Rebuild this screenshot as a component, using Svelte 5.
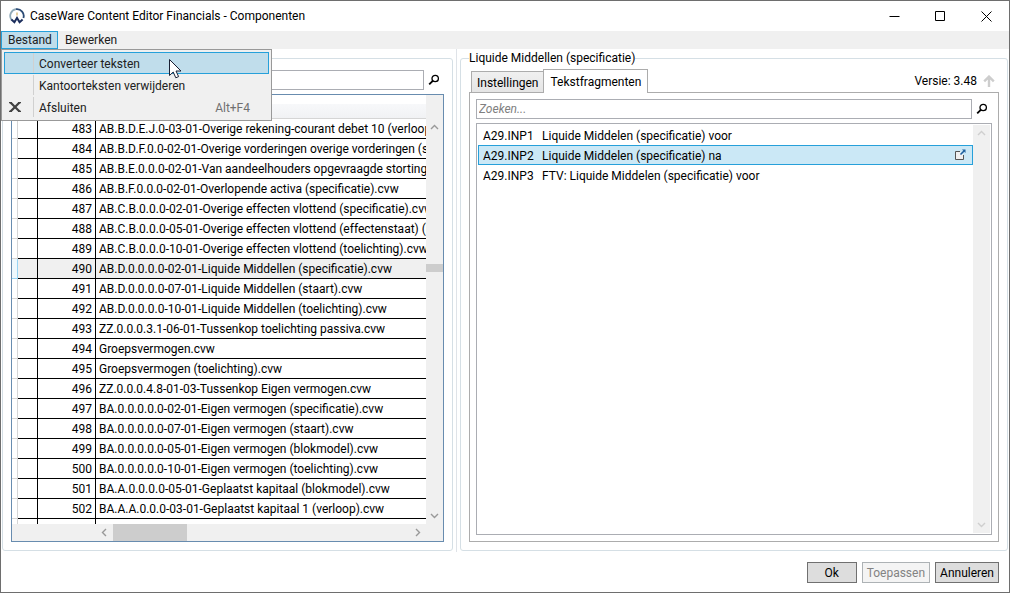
<script lang="ts">
    type Row = { nr: number; name: string };

    let components: Row[] = [
        { nr: 483, name: 'AB.B.D.E.J.0-03-01-Overige rekening-courant debet 10 (verloop).cvw' },
        { nr: 484, name: 'AB.B.D.F.0.0-02-01-Overige vorderingen overige vorderingen (specificatie).cvw' },
        { nr: 485, name: 'AB.B.E.0.0.0-02-01-Van aandeelhouders opgevraagde stortingen.cvw' },
        { nr: 486, name: 'AB.B.F.0.0.0-02-01-Overlopende activa (specificatie).cvw' },
        { nr: 487, name: 'AB.C.B.0.0.0-02-01-Overige effecten vlottend (specificatie).cvw' },
        { nr: 488, name: 'AB.C.B.0.0.0-05-01-Overige effecten vlottend (effectenstaat) (blokmodel).cvw' },
        { nr: 489, name: 'AB.C.B.0.0.0-10-01-Overige effecten vlottend (toelichting).cvw' },
        { nr: 490, name: 'AB.D.0.0.0.0-02-01-Liquide Middellen (specificatie).cvw' },
        { nr: 491, name: 'AB.D.0.0.0.0-07-01-Liquide Middellen (staart).cvw' },
        { nr: 492, name: 'AB.D.0.0.0.0-10-01-Liquide Middellen (toelichting).cvw' },
        { nr: 493, name: 'ZZ.0.0.0.3.1-06-01-Tussenkop toelichting passiva.cvw' },
        { nr: 494, name: 'Groepsvermogen.cvw' },
        { nr: 495, name: 'Groepsvermogen (toelichting).cvw' },
        { nr: 496, name: 'ZZ.0.0.0.4.8-01-03-Tussenkop Eigen vermogen.cvw' },
        { nr: 497, name: 'BA.0.0.0.0.0-02-01-Eigen vermogen (specificatie).cvw' },
        { nr: 498, name: 'BA.0.0.0.0.0-07-01-Eigen vermogen (staart).cvw' },
        { nr: 499, name: 'BA.0.0.0.0.0-05-01-Eigen vermogen (blokmodel).cvw' },
        { nr: 500, name: 'BA.0.0.0.0.0-10-01-Eigen vermogen (toelichting).cvw' },
        { nr: 501, name: 'BA.A.0.0.0.0-05-01-Geplaatst kapitaal (blokmodel).cvw' },
        { nr: 502, name: 'BA.A.A.0.0.0-03-01-Geplaatst kapitaal 1 (verloop).cvw' }
    ];

    let fragments = [
        { code: 'A29.INP1', title: 'Liquide Middelen (specificatie) voor' },
        { code: 'A29.INP2', title: 'Liquide Middelen (specificatie) na' },
        { code: 'A29.INP3', title: 'FTV: Liquide Middelen (specificatie) voor' }
    ];

    let selectedRow = 490;
    let selectedFragment = 'A29.INP2';
    let activeTab = 'Tekstfragmenten';
    let menuOpen = true;
    let componentQuery = '';
    let fragmentQuery = '';
</script>

{#snippet magnifier()}
    <svg width="12" height="12" viewBox="0 0 12 12" aria-hidden="true">
        <circle cx="7.2" cy="4.5" r="3.2" fill="none" stroke="#000" stroke-width="1.3" />
        <path d="M4.8 6.8L1.2 10.4" stroke="#000" stroke-width="1.8" />
    </svg>
{/snippet}

{#snippet chevron(d: string)}
    <svg width="9" height="9" viewBox="0 0 9 9" aria-hidden="true">
        <path {d} fill="none" stroke="currentColor" stroke-width="1.4" />
    </svg>
{/snippet}

<div class="window">
    <header class="titlebar">
        <svg class="logo" width="16" height="16" viewBox="0 0 16 16" aria-hidden="true">
            <path d="M2.6 12A6.8 6.8 0 0 1 7 1.2" fill="none" stroke="#8fa9b8" stroke-width="1.8" />
            <path d="M7 1.2A6.8 6.8 0 0 1 14.4 10" fill="none" stroke="#2b4a75" stroke-width="1.8" />
            <path d="M8 4.5V7.5" stroke="#d9b977" stroke-width="1.4" />
            <path d="M2.4 11.5L5.4 14.2L8 10L10.6 14.2L13.6 11.5" fill="none" stroke="#1b2d5c" stroke-width="2" />
        </svg>
        <h1>CaseWare Content Editor Financials - Componenten</h1>
        <button class="caption" aria-label="Minimaliseren">
            <svg width="11" height="11" viewBox="0 0 11 11"><path d="M.5 5.5H10.5" stroke="#000" /></svg>
        </button>
        <button class="caption" aria-label="Maximaliseren">
            <svg width="11" height="11" viewBox="0 0 11 11"><path d="M.5 .5H9.5V9.5H.5Z" fill="none" stroke="#000" /></svg>
        </button>
        <button class="caption" aria-label="Sluiten">
            <svg width="11" height="11" viewBox="0 0 11 11"><path d="M.5 .5L10.5 10.5M10.5 .5L.5 10.5" stroke="#000" /></svg>
        </button>
    </header>

    <nav class="menubar">
        <button class="menu-title" class:open={menuOpen} on:click={() => (menuOpen = !menuOpen)}>Bestand</button>
        <button class="menu-title">Bewerken</button>

        {#if menuOpen}
            <div class="menu">
                <button class="menu-item highlighted">
                    <span class="menu-icon"></span>
                    <span class="menu-text">Converteer teksten</span>
                </button>
                <button class="menu-item">
                    <span class="menu-icon"></span>
                    <span class="menu-text">Kantoorteksten verwijderen</span>
                </button>
                <button class="menu-item">
                    <span class="menu-icon">
                        <svg width="12" height="10" viewBox="0 0 12 10">
                            <path d="M1.5 .5L10.5 9.5M10.5 .5L1.5 9.5" stroke="#424242" stroke-width="2.2" />
                            <path d="M0 .6H3M9 .6H12M0 9.4H3M9 9.4H12" stroke="#424242" stroke-width="1.2" />
                        </svg>
                    </span>
                    <span class="menu-text">Afsluiten</span>
                    <span class="shortcut">Alt+F4</span>
                </button>
                <svg class="pointer" width="13" height="20" viewBox="0 0 13 20" aria-hidden="true">
                    <path d="M.5 .5V16.5L4.2 13L6.8 18.8L9.6 17.6L7 12H12Z" fill="#fff" stroke="#1a1f33" />
                </svg>
            </div>
        {/if}
    </nav>

    <main class="panes">
        <section class="pane left">
            <fieldset class="group">
                <div class="search">
                    <input type="text" aria-label="Componenten zoeken" bind:value={componentQuery} />
                    <button class="search-btn" aria-label="Zoeken">{@render magnifier()}</button>
                </div>
                <div class="datagrid">
                    <div class="viewport">
                        <table>
                            <colgroup>
                                <col class="col-head" />
                                <col class="col-mark" />
                                <col class="col-nr" />
                                <col />
                            </colgroup>
                            <thead>
                                <tr><th></th><th></th><th></th><th></th></tr>
                            </thead>
                            <tbody>
                                {#each components as row}
                                    <tr class:selected={row.nr === selectedRow} on:click={() => (selectedRow = row.nr)}>
                                        <td class="row-head"></td>
                                        <td></td>
                                        <td class="nr">{row.nr}</td>
                                        <td class="name">{row.name}</td>
                                    </tr>
                                {/each}
                                <tr><td class="row-head"></td><td></td><td></td><td class="name"></td></tr>
                            </tbody>
                        </table>
                    </div>
                    <div class="vscroll grid-vscroll">
                        {@render chevron('M1 6L4.5 2.5L8 6')}
                        <span class="vthumb"></span>
                        {@render chevron('M1 3L4.5 6.5L8 3')}
                    </div>
                    <div class="hscroll">
                        {@render chevron('M6 1L2.5 4.5L6 8')}
                        <span class="htrack"><span class="hthumb"></span></span>
                        {@render chevron('M3 1L6.5 4.5L3 8')}
                    </div>
                </div>
            </fieldset>
        </section>

        <div class="splitter"></div>

        <section class="pane right">
            <fieldset class="group">
                <legend>Liquide Middellen (specificatie)</legend>
                <div class="tabs">
                    {#each ['Instellingen', 'Tekstfragmenten'] as tab}
                        <button class="tab" class:active={tab === activeTab} on:click={() => (activeTab = tab)}>{tab}</button>
                    {/each}
                    <div class="version">
                        <span>Versie: 3.48</span>
                        <svg width="12" height="12" viewBox="0 0 12 12" aria-hidden="true">
                            <path d="M6 12V2M1.2 6.4L6 1.6L10.8 6.4" fill="none" stroke="#cdcdcd" stroke-width="2.4" />
                        </svg>
                    </div>
                </div>
                <div class="tab-body">
                    <div class="search">
                        <input type="text" placeholder="Zoeken..." aria-label="Tekstfragmenten zoeken" bind:value={fragmentQuery} />
                        <button class="search-btn" aria-label="Zoeken">{@render magnifier()}</button>
                    </div>
                    <div class="listbox">
                        <ul>
                            {#each fragments as f}
                                <li class:selected={f.code === selectedFragment}>
                                    <button class="fragment" on:click={() => (selectedFragment = f.code)}>
                                        <span class="code">{f.code}</span>
                                        <span>{f.title}</span>
                                    </button>
                                    {#if f.code === selectedFragment}
                                        <button class="open-btn" aria-label="Openen">
                                            <svg width="12" height="12" viewBox="0 0 12 12">
                                                <path d="M6 2.5H1.5V10.5H9.5V6" fill="#f0f0f0" stroke="#555" />
                                                <path d="M6.5 5.5L10 2" stroke="#1c5f9e" stroke-width="1.6" />
                                                <path d="M8 .5H11.5V4Z" fill="#1c5f9e" />
                                            </svg>
                                        </button>
                                    {/if}
                                </li>
                            {/each}
                        </ul>
                        <div class="vscroll faint">
                            {@render chevron('M1 6L4.5 2.5L8 6')}
                            {@render chevron('M1 3L4.5 6.5L8 3')}
                        </div>
                    </div>
                </div>
            </fieldset>
        </section>
    </main>

    <footer class="actions">
        <button class="action">Ok</button>
        <button class="action" disabled>Toepassen</button>
        <button class="action">Annuleren</button>
    </footer>
</div>

<style>
    :global(body) {
        margin: 0;
    }

    .window,
    .window * {
        box-sizing: border-box;
    }

    .window {
        display: flex;
        flex-direction: column;
        height: 100vh;
        border: 1px solid #6e6e6e;
        background: #fff;
        color: #000;
        font-family: "Segoe UI", Roboto, "Open Sans", sans-serif;
        font-size: 12px;
        line-height: 16px;
        overflow: hidden;
    }

    button,
    input {
        font: inherit;
        color: inherit;
        margin: 0;
    }

    button {
        border: none;
        background: none;
        padding: 0;
        white-space: nowrap;
    }

    svg {
        display: block;
        flex: none;
    }

    /* Title bar */
    .titlebar {
        display: flex;
        align-items: center;
        height: 30px;
        flex: none;
        padding-left: 8px;
    }

    h1 {
        flex: 1;
        margin: 0 0 0 5px;
        font-size: 12px;
        font-weight: normal;
    }

    .caption {
        display: flex;
        align-items: center;
        justify-content: center;
        width: 46px;
        height: 30px;
    }

    /* Menu */
    .menubar {
        position: relative;
        display: flex;
        flex: none;
        height: 18px;
        background: #f0f0f0;
        color: #212121;
    }

    .menu-title {
        padding: 0 5px 0 6px;
        border: 1px solid transparent;
    }

    .menu-title.open {
        border-color: #26a0da;
        background: #c0ddeb;
    }

    .menu {
        position: absolute;
        top: 18px;
        left: 0;
        z-index: 10;
        width: 271px;
        padding: 2px;
        border: 1px solid #999;
        background: #f0f0f0;
    }

    .menu-item {
        display: flex;
        align-items: center;
        width: 100%;
        height: 22px;
        border: 1px solid transparent;
        text-align: left;
    }

    .menu-item.highlighted {
        border-color: #26a0da;
        background: #c0ddeb;
    }

    .menu-icon {
        display: flex;
        align-items: center;
        align-self: stretch;
        width: 29px;
        padding-left: 4px;
        border-right: 1px solid #d0d0d0;
    }

    .menu-text {
        flex: 1;
        padding: 2px 0 0 5px;
    }

    .shortcut {
        padding: 2px 18px 0 0;
        color: #707070;
    }

    .pointer {
        position: absolute;
        top: 9px;
        left: 167px;
    }

    /* Panes */
    .panes {
        display: grid;
        grid-template-columns: minmax(0, 455fr) 1px minmax(0, 552fr);
        flex: 1;
        min-height: 0;
    }

    .pane {
        display: flex;
        min-width: 0;
        min-height: 0;
    }

    .left {
        padding: 9px 3px 1px 1px;
    }

    .right {
        padding: 1px 1px 1px 3px;
    }

    .splitter {
        background: #dfe3e8;
    }

    .group {
        display: flex;
        flex-direction: column;
        flex: 1;
        min-width: 0;
        min-height: 0;
        margin: 0;
        padding: 11px 8px 8px;
        border: 1px solid #d5dfe5;
        border-radius: 3px;
    }

    .right .group {
        padding-top: 3px;
    }

    legend {
        margin: 0;
        padding: 0;
    }

    .search {
        display: flex;
        flex: none;
        height: 20px;
    }

    .search input {
        flex: 1;
        min-width: 0;
        padding: 0 2px;
        border: 1px solid #abadb3;
        background: #fff;
        outline: none;
    }

    .search input::placeholder {
        color: #808080;
        font-style: italic;
        opacity: 1;
    }

    .search-btn {
        display: flex;
        align-items: center;
        justify-content: center;
        width: 20px;
    }

    /* Component table */
    .datagrid {
        display: grid;
        grid-template-columns: minmax(0, 1fr) 17px;
        grid-template-rows: minmax(0, 1fr) 17px;
        flex: 1;
        min-height: 0;
        margin-top: 4px;
        border: 1px solid #688caf;
    }

    .viewport {
        overflow: hidden;
    }

    table {
        width: 100%;
        table-layout: fixed;
        border-collapse: separate;
        border-spacing: 0;
    }

    .col-head {
        width: 6px;
    }

    .col-mark {
        width: 20px;
    }

    .col-nr {
        width: 58px;
    }

    th {
        height: 24px;
        padding: 0;
        border-bottom: 1px solid #d5d5d5;
        background: linear-gradient(#fff 40%, #f7f8fa 40%, #f1f2f4);
    }

    td {
        height: 20px;
        padding: 0 3px 0 2px;
        border-right: 1px solid #000;
        border-bottom: 1px solid #000;
        overflow: hidden;
        white-space: nowrap;
    }

    .row-head {
        padding: 0;
        border-color: #d5d5d5;
    }

    .name {
        padding: 0 0 0 3px;
        border-right: none;
    }

    .nr {
        text-align: right;
    }

    .selected td {
        background: #f0f0f0;
    }

    .selected .row-head {
        border-color: #98d4f4;
        background: #eef8fd;
    }

    /* Scroll bars */
    .vscroll {
        display: flex;
        flex-direction: column;
        align-items: center;
        justify-content: space-between;
        width: 17px;
        padding: 4px 0;
        background: #f0f0f0;
        color: #999;
    }

    .grid-vscroll {
        padding-top: 28px;
    }

    .vthumb {
        width: 17px;
        height: 8px;
        margin-bottom: 108px;
        background: #cdcdcd;
    }

    .faint {
        color: #cfcfcf;
    }

    .hscroll {
        display: flex;
        align-items: center;
        grid-column: 1 / -1;
        padding: 0 21px 0 88px;
        background: #f0f0f0;
        color: #999;
    }

    .htrack {
        flex: 1;
        height: 17px;
        padding: 0 4px;
    }

    .hthumb {
        display: block;
        width: 25%;
        height: 17px;
        background: #cdcdcd;
    }

    /* Tabs */
    .tabs {
        display: flex;
        align-items: flex-end;
        flex: none;
        height: 23px;
        padding-left: 2px;
    }

    .tab {
        height: 21px;
        padding: 2px 5px 0;
        border: 1px solid #acacac;
        border-bottom: none;
        background: linear-gradient(#f0f0f0, #e5e5e5);
    }

    .tab.active {
        height: 24px;
        margin: 0 0 -1px -1px;
        padding: 0 6px;
        background: #fff;
        z-index: 1;
    }

    .version {
        display: flex;
        align-items: center;
        gap: 6px;
        height: 23px;
        margin-left: auto;
        padding-right: 4px;
    }

    .tab-body {
        display: flex;
        flex-direction: column;
        flex: 1;
        min-height: 0;
        padding: 6px;
        border: 1px solid #acacac;
    }

    .listbox {
        display: flex;
        flex: 1;
        min-height: 0;
        margin-top: 4px;
        padding: 1px;
        border: 1px solid #abadb3;
    }

    ul {
        flex: 1;
        min-width: 0;
        margin: 0;
        padding: 0;
        list-style: none;
    }

    li {
        display: flex;
        align-items: center;
        height: 20px;
        border: 1px solid transparent;
    }

    li.selected {
        border-color: #26a0da;
        background: #cbe8f6;
    }

    .fragment {
        display: flex;
        flex: 1;
        padding: 2px 0 0 4px;
        text-align: left;
    }

    .code {
        width: 59px;
    }

    .open-btn {
        padding-right: 6px;
    }

    /* Dialog buttons */
    .actions {
        display: flex;
        justify-content: flex-end;
        flex: none;
        gap: 5px;
        padding: 10px 10px 9px;
    }

    .action {
        min-width: 50px;
        height: 21px;
        padding: 0 4px;
        border: 1px solid #707070;
        background: #ddd;
    }

    .action:disabled {
        border-color: #adb2b5;
        background: #f4f4f4;
        color: #838383;
    }
</style>
